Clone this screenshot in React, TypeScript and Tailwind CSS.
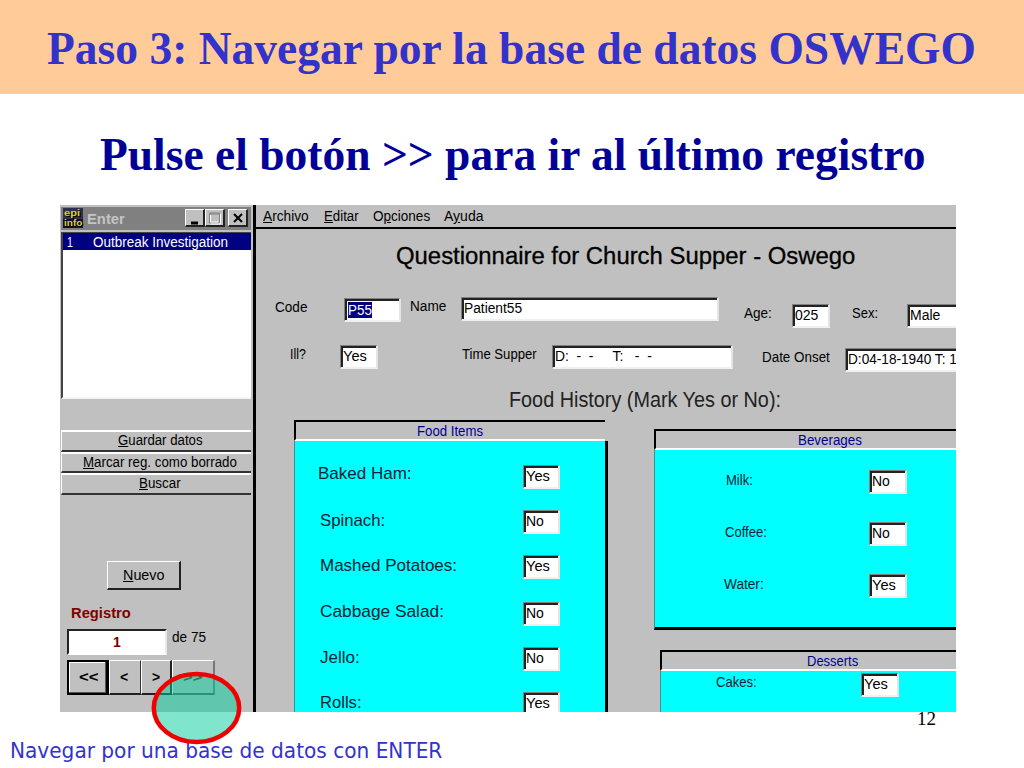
import React, { useLayoutEffect, useRef, useState } from 'react';

// Text squeezed or stretched horizontally to a given width, like a bitmap UI font.
function Fit({ w, className = '', children }: { w: number; className?: string; children: React.ReactNode }) {
  const ref = useRef<HTMLSpanElement>(null);
  const [scale, setScale] = useState(1);
  useLayoutEffect(() => {
    const natural = ref.current ? ref.current.offsetWidth : 0;
    if (natural) setScale(w / natural);
  }, [w]);
  return (
    <span className={`block shrink-0 whitespace-pre ${className}`} style={{ width: w }}>
      <span ref={ref} className="inline-block origin-left" style={{ transform: `scaleX(${scale})` }}>
        {children}
      </span>
    </span>
  );
}

function Field({ className = '', text, w, selected = false }: { className?: string; text: string; w: number; selected?: boolean }) {
  return (
    <div className={`flex h-6 shrink-0 items-center overflow-hidden border-r-2 border-b-2 border-r-[#e4e4e4] border-b-[#f0f0f0] border-l border-t border-l-[#808080] border-t-[#808080] bg-white ${className}`}>
      <div className="flex h-full w-full items-start border-l-2 border-t-2 border-[#222]">
        <Fit w={w} className={selected ? 'ml-px mt-px bg-[#000080] text-white leading-4' : 'leading-[17px]'}>{text}</Fit>
      </div>
    </div>
  );
}

const foods = [
  { name: 'Baked Ham:', w: 94, value: 'Yes', row: 'h-[45px] pl-[23px]', gap: 'ml-[111px]', drop: '' },
  { name: 'Spinach:', w: 65, value: 'No', row: 'h-[45px] pl-[25px]', gap: 'ml-[138px]', drop: 'mt-[2px]' },
  { name: 'Mashed Potatoes:', w: 137, value: 'Yes', row: 'h-[47px] pl-[25px]', gap: 'ml-[66px]', drop: 'mt-[2px]' },
  { name: 'Cabbage Salad:', w: 124, value: 'No', row: 'h-[45px] pl-[25px]', gap: 'ml-[79px]', drop: 'mt-px' },
  { name: 'Jello:', w: 40, value: 'No', row: 'h-[45px] pl-[25px]', gap: 'ml-[163px]', drop: 'mt-[2px]' },
  { name: 'Rolls:', w: 42, value: 'Yes', row: 'h-[45px] pl-[25px]', gap: 'ml-[161px]', drop: 'mt-[2px]' },
];

const drinks = [
  { name: 'Milk:', w: 27, value: 'No', pad: 'pl-[71px]', gap: 'ml-[116px]' },
  { name: 'Coffee:', w: 42, value: 'No', pad: 'pl-[70px]', gap: 'ml-[102px]' },
  { name: 'Water:', w: 40, value: 'Yes', pad: 'pl-[69px]', gap: 'ml-[105px]' },
];

function PanelHead({ w, className, children }: { w: number; className: string; children: React.ReactNode }) {
  return (
    <div className={`flex h-[21px] shrink-0 items-center border-b-2 border-b-white border-l-2 border-t-2 border-l-black border-t-black text-[14px] text-[#000090] ${className}`}>
      <Fit w={w} className="leading-4">{children}</Fit>
    </div>
  );
}

function SideButton({ w, first, rest }: { w: number; first: string; rest: string }) {
  return (
    <button className="flex h-[21.5px] w-[190px] items-center justify-center border-b-2 border-l border-t-2 border-b-[#333] border-l-white border-t-white pb-px pl-[7px]">
      <Fit w={w} className="leading-4"><u>{first}</u>{rest}</Fit>
    </button>
  );
}

function WinButton({ className, children }: { className: string; children: React.ReactNode }) {
  return (
    <div className={`flex h-[18px] shrink-0 items-center justify-center border-b-2 border-l border-r-2 border-t border-b-[#222] border-l-white border-r-[#222] border-t-white bg-[#c0c0c0] ${className}`}>
      <svg width="14" height="14" viewBox="0 0 14 14" fill="none">{children}</svg>
    </div>
  );
}

function NavButton({ className, children }: { className: string; children: React.ReactNode }) {
  return (
    <button className={`flex h-[35px] items-center justify-center font-bold ${className}`}>
      <Fit w={String(children).length === 2 ? 19 : 8} className="leading-4">{children}</Fit>
    </button>
  );
}

function SidePanel() {
  return (
    <aside className="flex w-[193px] shrink-0 flex-col pl-px">
      <div className="mt-[2px] flex h-[23px] w-[190px] items-start bg-[#808080] pl-[2px] pt-px">
        <div className="flex h-[20px] w-[20px] flex-col bg-[linear-gradient(to_bottom,#30304a_55%,#101030_55%)] text-[9px] font-bold leading-[10px] text-[#d8d430] [text-shadow:1px_1px_0_#000]">
          <Fit w={16} className="pl-px">epi</Fit>
          <Fit w={19} className="pl-px">info</Fit>
        </div>
        <Fit w={38} className="ml-[4px] mt-px text-[14px] font-bold leading-[20px] text-[#c4c4c4]">Enter</Fit>
        <WinButton className="ml-[60px] mt-px w-[20px]"><path d="M3 12h7" stroke="#000" strokeWidth="3" /></WinButton>
        <WinButton className="mt-px w-[20px]"><path d="M1.5 2h10v10h-10zM1.5 3h10" stroke="#808080" /><path d="M2.5 13h10V3M2.5 4v7h8" stroke="#fff" /></WinButton>
        <WinButton className="ml-[3px] mt-px w-[20px]"><path d="M3 3l8 8M11 3l-8 8" stroke="#000" strokeWidth="2" /></WinButton>
      </div>
      <div className="mt-[2px] h-[167px] w-[190px] border-b-2 border-l-2 border-t border-b-[#f4f4f4] border-l-[#444] border-t-[#444] bg-white">
        <div className="flex h-[17px] items-center bg-[#000080] pl-[4px] text-[14px] text-white">
          <Fit w={6} className="leading-4">1</Fit>
          <Fit w={135} className="ml-[20px] leading-4">Outbreak Investigation</Fit>
        </div>
      </div>
      <div className="mt-[31px] flex flex-col text-[14px]">
        <SideButton w={85} first="G" rest="uardar datos" />
        <SideButton w={154} first="M" rest="arcar reg. como borrado" />
        <SideButton w={42} first="B" rest="uscar" />
      </div>
      <button className="ml-[46px] mt-[66px] flex h-[29px] w-[74px] items-center justify-center border-b-2 border-l border-r-2 border-t border-b-[#222] border-l-white border-r-[#222] border-t-white text-[14px]">
        <Fit w={41} className="leading-4"><u>N</u>uevo</Fit>
      </button>
      <Fit w={60} className="ml-[10px] mt-[15px] text-[14px] font-bold leading-4 text-[#800000]">Registro</Fit>
      <div className="ml-[6px] mt-[8px] flex items-start text-[14px]">
        <div className="flex h-[26px] w-[100px] items-center justify-center border-b-2 border-l-2 border-r-2 border-t-2 border-b-white border-l-[#222] border-r-[#e8e8e8] border-t-[#222] bg-white font-bold text-[#800000]">
          <Fit w={8} className="leading-4">1</Fit>
        </div>
        <Fit w={34} className="ml-[5px] leading-4">de 75</Fit>
      </div>
      <div className="ml-[6px] mt-[5px] flex text-[14px]">
        <NavButton className="w-[42px] border-2 border-r-[3px] border-black pr-px shadow-[inset_-1px_-1px_0_#555,inset_1px_1px_0_#fff]">{'<<'}</NavButton>
        <NavButton className="w-[32px] border-b-2 border-l border-r border-t border-b-[#222] border-l-white border-r-[#333] border-t-white pr-[2px]">{'<'}</NavButton>
        <NavButton className="w-[31px] border-b-2 border-l border-r-2 border-t border-b-[#222] border-l-white border-r-[#222] border-t-white">{'>'}</NavButton>
        <NavButton className="w-[43px] border-b-2 border-l border-r-2 border-t border-b-[#555] border-l-white border-r-[#777] border-t-white pr-[3px] text-[#333]">{'>>'}</NavButton>
      </div>
    </aside>
  );
}

function Form() {
  return (
    <section className="flex min-w-0 flex-1 flex-col overflow-hidden border-l-[3px] border-black text-[14px]">
      <nav className="flex h-6 shrink-0 items-center border-b-2 border-black pl-[7px]">
        <Fit w={46} className="leading-4"><u>A</u>rchivo</Fit>
        <Fit w={35} className="ml-[15px] leading-4"><u>E</u>ditar</Fit>
        <Fit w={57} className="ml-[14px] leading-4">O<u>p</u>ciones</Fit>
        <Fit w={39} className="ml-[14px] leading-4">A<u>y</u>uda</Fit>
      </nav>
      <Fit w={459} className="ml-[140px] mt-[14px] text-[23px] leading-[26px] [-webkit-text-stroke:0.3px_#000]">Questionnaire for Church Supper - Oswego</Fit>
      <div className="mt-[28px] flex h-8 shrink-0 items-start">
        <Fit w={32} className="ml-[19px] mt-[2px] leading-4">Code</Fit>
        <Field className="ml-[37px] mt-px w-[57px]" text="P55" w={24} selected />
        <Fit w={36} className="ml-[9px] mt-px leading-4">Name</Fit>
        <Field className="ml-[15px] w-[258px]" text="Patient55" w={58} />
        <Fit w={28} className="ml-[25px] mt-[8px] leading-4">Age:</Fit>
        <Field className="ml-[20px] mt-[7px] w-[38px]" text="025" w={23} />
        <Fit w={26} className="ml-[22px] mt-[8px] leading-4">Sex:</Fit>
        <Field className="ml-[29px] mt-[7px] w-[60px]" text="Male" w={30} />
      </div>
      <div className="mt-[16px] flex h-8 shrink-0 items-start">
        <Fit w={16} className="ml-[34px] mt-px leading-4">Ill?</Fit>
        <Field className="ml-[34px] w-[38px]" text="Yes" w={24} />
        <Fit w={75} className="ml-[84px] mt-px leading-4">Time Supper</Fit>
        <Field className="ml-[15px] w-[181px]" text={'D:  -  -     T:   -  -'} w={97} />
        <Fit w={68} className="ml-[29px] mt-[4px] leading-4">Date Onset</Fit>
        <Field className="ml-[15px] mt-[3px] w-[140px]" text="D:04-18-1940 T: 1" w={109} />
      </div>
      <Fit w={272} className="ml-[253px] mt-[11px] text-[22px] leading-6 text-[#222]">Food History (Mark Yes or No):</Fit>
      <div className="mt-[8px] flex min-h-0 flex-1 items-start">
        <div className="ml-[38px] h-[300px] w-[314px] shrink-0">
          <PanelHead w={66} className="w-[311px] pl-[121px]">Food Items</PanelHead>
          <div className="h-[290px] border-l border-r-[3px] border-l-[#409090] border-r-black bg-[#00ffff] pt-[24px]">
            {foods.map((f) => (
              <div key={f.name} className={`flex items-start ${f.row}`}>
                <Fit w={f.w} className={`text-[17px] leading-[18px] text-[#023] ${f.drop}`}>{f.name}</Fit>
                <Field className={`w-[37px] ${f.gap}`} text={f.value} w={f.value === 'No' ? 18 : 24} />
              </div>
            ))}
          </div>
        </div>
        <div className="ml-[46px] mt-[9px] w-[310px] shrink-0">
          <PanelHead w={64} className="pl-[142px]">Beverages</PanelHead>
          <div className="h-[180px] border-b-[3px] border-l border-b-black border-l-[#409090] bg-[#00ffff] pt-[20px]">
            {drinks.map((d) => (
              <div key={d.name} className={`flex h-[52px] items-start ${d.pad}`}>
                <Fit w={d.w} className="mt-[2px] leading-4 text-[#023]">{d.name}</Fit>
                <Field className={`w-[38px] ${d.gap}`} text={d.value} w={d.value === 'No' ? 18 : 24} />
              </div>
            ))}
          </div>
          <div className="ml-[6px] mt-[20px]">
            <PanelHead w={51} className="pl-[145px]">Desserts</PanelHead>
            <div className="flex h-[60px] items-start border-l border-[#409090] bg-[#00ffff] pl-[55px] pt-[2px]">
              <Fit w={41} className="mt-px leading-4 text-[#023]">Cakes:</Fit>
              <Field className="ml-[104px] w-[38px]" text="Yes" w={24} />
            </div>
          </div>
        </div>
      </div>
    </section>
  );
}

export default function App() {
  return (
    <div className="flex h-[768px] w-[1024px] flex-col overflow-hidden bg-white font-['Liberation_Sans',sans-serif] text-black">
      <header className="flex h-[94px] shrink-0 items-center bg-[#ffcc99] pl-[47px] pt-[3px] font-['Liberation_Serif',serif] text-[46px] font-bold text-[#3333cc]">
        <Fit w={929}>Paso 3: Navegar por la base de datos OSWEGO</Fit>
      </header>
      <h2 className="flex h-[111px] shrink-0 items-center pl-[100px] pt-[9px] font-['Liberation_Serif',serif] text-[46px] font-bold text-[#000099]">
        <Fit w={825}>Pulse el botón &gt;&gt; para ir al último registro</Fit>
      </h2>
      <main className="ml-[60px] flex h-[507px] w-[896px] shrink-0 overflow-hidden bg-[#c0c0c0]">
        <SidePanel />
        <Form />
      </main>
      <div className="flex h-[56px] shrink-0 items-start">
        <Fit w={432} className="ml-[10px] mt-[25px] font-['DejaVu_Sans_Condensed','DejaVu_Sans',sans-serif] text-[21px] leading-[28px] text-[#3333cc]">Navegar por una base de datos con ENTER</Fit>
        <Fit w={19} className="ml-[475px] -mt-[4px] font-['Liberation_Serif',serif] text-[19px] leading-[22px]">12</Fit>
      </div>
      <svg className="pointer-events-none absolute left-[150px] top-[670px]" width="94" height="76" viewBox="0 0 94 76">
        <ellipse cx="46.5" cy="38" rx="42.7" ry="34" fill="rgb(0 204 153 / 0.5)" stroke="#f00000" strokeWidth="4.5" />
      </svg>
    </div>
  );
}
